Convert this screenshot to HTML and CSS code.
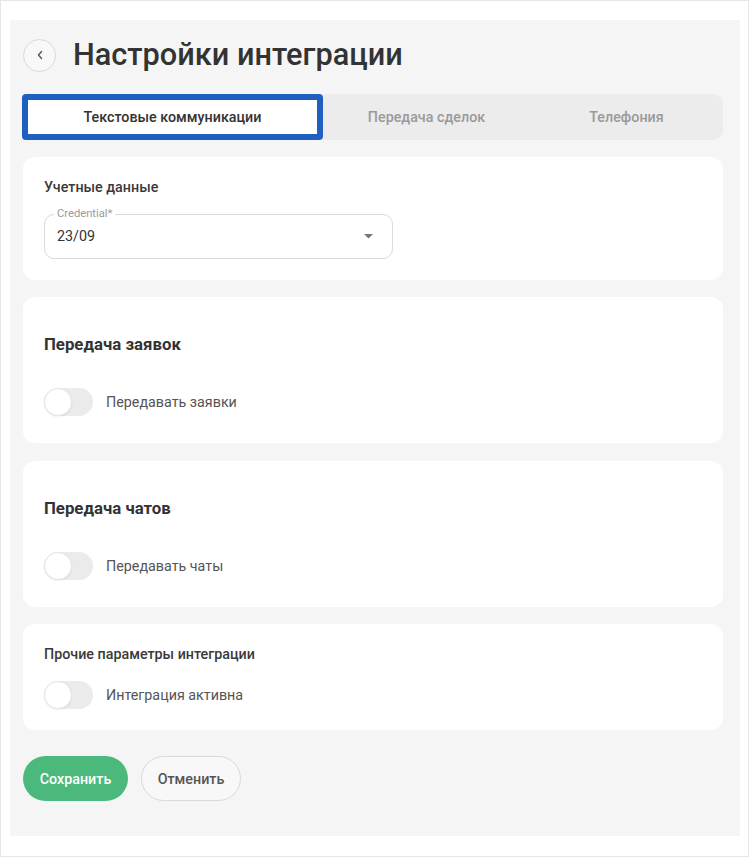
FILE: index.html
```
<!DOCTYPE html>
<html lang="ru">
<head>
<meta charset="utf-8">
<title>Настройки интеграции</title>
<link rel="stylesheet" href="styles.css">
</head>
<body>
<div class="frame">
  <div class="panel">
    <header class="header">
      <button class="back" type="button" aria-label="Назад">
        <svg width="8" height="10" viewBox="0 0 8 10"><path d="M5.5 1.5 L2.5 5 L5.5 8.5" fill="none" stroke="#555" stroke-width="1.4" stroke-linecap="round" stroke-linejoin="round"/></svg>
      </button>
      <h1 class="title">Настройки интеграции</h1>
    </header>

    <nav class="tabs">
      <div class="tab tab-first active">Текстовые коммуникации</div>
      <div class="tab tab-second">Передача сделок</div>
      <div class="tab tab-third">Телефония</div>
    </nav>

    <section class="card card-cred">
      <div class="card-subtitle">Учетные данные</div>
      <div class="select">
        <span class="select-label">Credential*</span>
        <span class="select-value">23/09</span>
        <svg class="select-arrow" width="9" height="5" viewBox="0 0 9 5"><path d="M0 0 L9 0 L4.5 4.5 Z" fill="#777"/></svg>
      </div>
    </section>

    <section class="card card-big">
      <h2 class="card-title">Передача заявок</h2>
      <label class="switch-row"><span class="switch"><span class="knob"></span></span><span class="switch-text">Передавать заявки</span></label>
    </section>

    <section class="card card-big">
      <h2 class="card-title">Передача чатов</h2>
      <label class="switch-row"><span class="switch"><span class="knob"></span></span><span class="switch-text">Передавать чаты</span></label>
    </section>

    <section class="card card-other">
      <div class="card-subtitle">Прочие параметры интеграции</div>
      <label class="switch-row"><span class="switch"><span class="knob"></span></span><span class="switch-text">Интеграция активна</span></label>
    </section>

    <div class="actions">
      <button class="btn btn-save" type="button">Сохранить</button>
      <button class="btn btn-cancel" type="button">Отменить</button>
    </div>
  </div>
</div>
</body>
</html>
```

FILE: styles.css
```
* { box-sizing: border-box; }
html, body { margin: 0; padding: 0; background: #fff; }
body { font-family: Roboto, "Noto Sans", Arial, sans-serif; color: #333; }

.frame {
  width: 749px;
  height: 857px;
  border: 1px solid #e6e6e6;
  padding: 19px 8px 20px 9px;
}

.panel {
  background: #f5f5f5;
  height: 816px;
  padding: 15px 17px 0 13px;
}

.header {
  display: flex;
  align-items: center;
  height: 40px;
  margin-bottom: 19px;
}
.back {
  width: 33px;
  height: 33px;
  border-radius: 50%;
  border: 1px solid #d9d9d9;
  background: #f8f8f8;
  display: flex;
  align-items: center;
  justify-content: center;
  padding: 0;
  margin-right: 17px;
}
.title {
  margin: 0;
  font-size: 30.7px;
  font-weight: 500;
  color: #333;
  line-height: 40px;
}

.tabs {
  display: flex;
  height: 46px;
  margin-left: -1px;
  background: #ececec;
  border-radius: 10px;
}
.tab {
  display: flex;
  align-items: center;
  justify-content: center;
  font-size: 14.3px;
  font-weight: 500;
  color: #9a9a9a;
  white-space: nowrap;
}
.tab-first { flex: 0 0 301px; }
.tab-second { flex: 0 0 207px; }
.tab-third { flex: 1 1 auto; }
.tab.active {
  background: #fff;
  color: #333;
  border: 6px solid #1f5fbf;
  border-radius: 4px;
}

.card {
  background: #fff;
  border-radius: 12px;
  margin-top: 17px;
  padding: 0 21px;
}
.card-cred { height: 123px; padding-top: 20px; }
.card-big { height: 146px; padding-top: 35px; }
.card-big + .card-big { margin-top: 18px; }
.card-other { height: 106px; padding-top: 20px; }

.card-subtitle {
  font-size: 14.3px;
  line-height: 20px;
  font-weight: 500;
  color: #3a3a3a;
}
.card-title {
  margin: 0;
  font-size: 16.8px;
  line-height: 24px;
  font-weight: 700;
  color: #333;
}

.select {
  position: relative;
  margin-top: 17px;
  width: 349px;
  height: 45px;
  border: 1px solid #dadada;
  border-radius: 10px;
  display: flex;
  align-items: center;
  padding: 0 19px 0 12px;
}
.select-label {
  position: absolute;
  top: -8px;
  left: 9px;
  padding: 0 3px;
  background: #fff;
  font-size: 11.2px;
  line-height: 14px;
  color: #9a9a9a;
}
.select-value {
  flex: 1;
  font-size: 14.3px;
  color: #333;
  padding-bottom: 1px;
}
.select-arrow { display: block; }

.switch-row {
  display: flex;
  align-items: center;
  gap: 13px;
}
.card-big .switch-row { margin-top: 32px; }
.card-other .switch-row { margin-top: 17px; }
.switch {
  position: relative;
  width: 49px;
  height: 28px;
  border-radius: 14px;
  background: #ebebeb;
}
.knob {
  position: absolute;
  left: 0;
  top: 0;
  width: 28px;
  height: 28px;
  border-radius: 50%;
  background: #fff;
  border: 1px solid #e6e6e6;
  box-shadow: 0 1px 2px rgba(0,0,0,0.06);
}
.switch-text {
  font-size: 14.3px;
  color: #555;
}

.actions {
  display: flex;
  gap: 13px;
  margin-top: 26px;
}
.btn {
  height: 45px;
  border-radius: 23px;
  font-family: Roboto, "Noto Sans", Arial, sans-serif;
  font-size: 14.3px;
  font-weight: 500;
  padding: 0;
}
.btn-save {
  width: 105px;
  background: #4bb97c;
  color: #fff;
  border: none;
}
.btn-cancel {
  width: 100px;
  background: #f8f8f8;
  color: #555;
  border: 1px solid #d9d9d9;
}
```
